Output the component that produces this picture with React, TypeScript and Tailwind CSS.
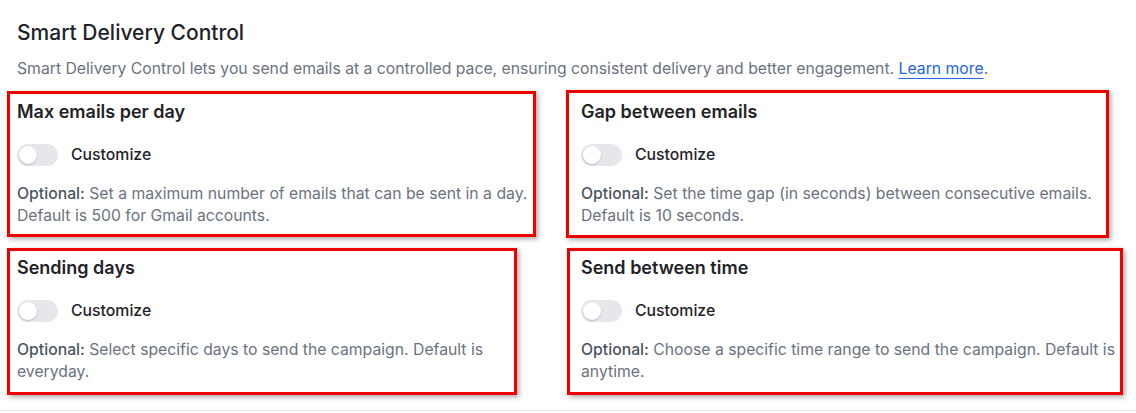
import React from "react";

type Card = {
  title: string;
  desc: string;
  box: string;
};

const cards: Card[] = [
  {
    title: "Max emails per day",
    desc: "Set a maximum number of emails that can be sent in a day. Default is 500 for Gmail accounts.",
    box: "left-[-10px] top-[1px] w-[529px] h-[146px]",
  },
  {
    title: "Gap between emails",
    desc: "Set the time gap (in seconds) between consecutive emails. Default is 10 seconds.",
    box: "left-[-15px] top-[0px] w-[543px] h-[148px]",
  },
  {
    title: "Sending days",
    desc: "Select specific days to send the campaign. Default is everyday.",
    box: "left-[-10px] top-[2px] w-[510px] h-[147px]",
  },
  {
    title: "Send between time",
    desc: "Choose a specific time range to send the campaign. Default is anytime.",
    box: "left-[-14px] top-[2px] w-[556px] h-[147px]",
  },
];

function Toggle() {
  return (
    <div className="w-[41px] h-[22px] rounded-full bg-[#e5e7eb] relative shrink-0">
      <div className="absolute left-[2px] top-[2px] w-[18px] h-[18px] rounded-full bg-white shadow-[0_1px_2px_rgba(0,0,0,0.2)]" />
    </div>
  );
}

function CardView({ c, narrow }: { c: Card; narrow?: boolean }) {
  return (
    <div className="relative pt-[10px] pb-[10px]">
      <div
        className={`absolute ${c.box} border-[3px] border-[#ee0000] shadow-[2px_2px_5px_rgba(0,0,0,0.35)] pointer-events-none`}
      />
      <h3 className="text-[18px] leading-[24px] font-semibold text-[#1f2328]">{c.title}</h3>
      <div className="mt-[20px] flex items-center gap-[13px]">
        <Toggle />
        <span className="text-[15.8px] leading-[22px] font-medium text-[#1f2328]">Customize</span>
      </div>
      <p
        className={`mt-[17px] text-[15.75px] leading-[22px] text-[#6b7280] ${narrow ? "w-[500px]" : "w-[540px]"}`}
      >
        <span className="font-medium text-[#4b5563]">Optional:</span> {c.desc}
      </p>
    </div>
  );
}

export default function App() {
  return (
    <div
      className="w-[1136px] h-[413px] bg-white overflow-hidden"
      style={{ fontFamily: "Inter, 'Noto Sans', sans-serif" }}
    >
      <div className="px-[17px] pt-[20px] pb-[17px] border-b border-[#e5e7eb]">
        <h2 className="text-[21px] leading-[26px] font-medium text-[#1f2328]">Smart Delivery Control</h2>
        <p className="mt-[12px] text-[15.75px] leading-[22px] text-[#6b7280] whitespace-nowrap">
          Smart Delivery Control lets you send emails at a controlled pace, ensuring consistent delivery and better
          engagement.{" "}
          <a className="text-[#2563eb] underline underline-offset-[4px] decoration-[#2563eb]">Learn more</a>.
        </p>
        <div className="mt-[10px] grid grid-cols-[540px_540px] gap-x-[24px] gap-y-[9px]">
          <CardView c={cards[0]} />
          <CardView c={cards[1]} />
          <CardView c={cards[2]} narrow />
          <CardView c={cards[3]} />
        </div>
      </div>
    </div>
  );
}
